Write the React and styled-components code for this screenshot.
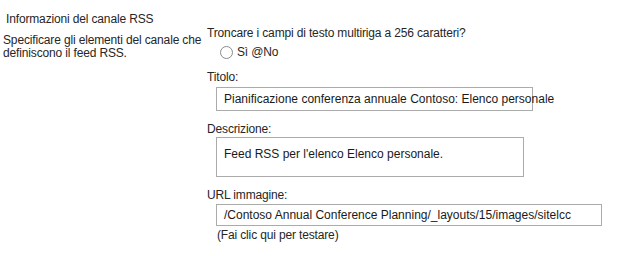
import React from 'react';
import styled, { createGlobalStyle } from 'styled-components';

const GlobalStyle = createGlobalStyle`
    body {
        margin: 0;
        background: #ffffff;
        font-family: "Liberation Sans", Arial, sans-serif;
        font-size: 12px;
        letter-spacing: -0.15px;
        color: #262626;
    }
`

function App() {
    return (
        <>
            <GlobalStyle />
            <Page>
                <InfoColumn>
                    <SectionTitle>Informazioni del canale RSS</SectionTitle>
                    <SectionText>Specificare gli elementi del canale che definiscono il feed RSS.</SectionText>
                </InfoColumn>
                <FieldColumn>
                    <Label $top={25}>Troncare i campi di testo multiriga a 256 caratteri?</Label>
                    <RadioRow>
                        <Radio />
                        <span>Sì @No</span>
                    </RadioRow>
                    <Label $top={9}>Titolo:</Label>
                    <Box $width={317} $height={24} $top={2}>Pianificazione conferenza annuale Contoso: Elenco personale</Box>
                    <Label $top={10}>Descrizione:</Label>
                    <Box $width={308} $height={40} $top={0} $align="flex-start" $padTop={8}>Feed RSS per l'elenco Elenco personale.</Box>
                    <Label $top={10}>URL immagine:</Label>
                    <Box $width={386} $height={22} $top={1}>/Contoso Annual Conference Planning/_layouts/15/images/sitelcc</Box>
                    <Hint>(Fai clic qui per testare)</Hint>
                </FieldColumn>
            </Page>
        </>
    )
}

export default App;



const Page = styled.div`
    display: flex;
    width: 624px;
    height: 256px;
`

const InfoColumn = styled.div`
    width: 204px;
    padding-left: 3px;
    box-sizing: border-box;
`

const SectionTitle = styled.div`
    margin-top: 11px;
    padding-left: 3px;
    line-height: 16px;
`

const SectionText = styled.div`
    margin-top: 7px;
    line-height: 13px;
`

const FieldColumn = styled.div`
    display: flex;
    flex-direction: column;
    align-items: flex-start;
    padding-left: 3px;
`

const Label = styled.div`
    margin-top: ${(p) => p.$top}px;
    line-height: 16px;
    white-space: nowrap;
`

const RadioRow = styled.div`
    display: flex;
    align-items: center;
    gap: 4px;
    margin-top: 3px;
    margin-left: 13px;
    line-height: 16px;
`

const Radio = styled.span`
    width: 11px;
    height: 11px;
    border: 1px solid #8a8a8a;
    border-radius: 50%;
    background: #ffffff;
`

const Box = styled.div`
    box-sizing: border-box;
    width: ${(p) => p.$width}px;
    height: ${(p) => p.$height}px;
    margin-top: ${(p) => p.$top}px;
    margin-left: 9px;
    border: 1px solid #ababab;
    display: flex;
    align-items: ${(p) => p.$align || 'center'};
    padding: ${(p) => p.$padTop || 0}px 0 0 7px;
    white-space: nowrap;
    overflow: visible;
    line-height: 16px;
    letter-spacing: 0;
    color: #1a1a1a;
`

const Hint = styled.div`
    margin-top: 1px;
    margin-left: 10px;
    line-height: 16px;
`
